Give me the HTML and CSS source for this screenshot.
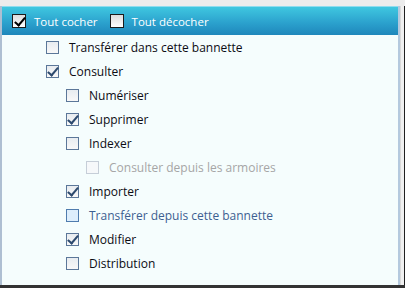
FILE: index.html
```html
<html>

<head>
  <meta charset="utf-8">
  <link rel="stylesheet" href="styles.css">
</head>

<body>
  <div class="frame">
    <div class="panel">
      <div class="panel-header">
        <div class="header-item">
          <span class="box box-header checked"></span>
          <span class="text">Tout cocher</span>
        </div>
        <div class="header-item">
          <span class="box box-header"></span>
          <span class="text">Tout décocher</span>
        </div>
      </div>
      <div class="tree">
        <div class="tree-item level-1">
          <span class="box"></span>
          <span class="text">Transférer dans cette bannette</span>
        </div>
        <div class="tree-item level-1">
          <span class="box checked"></span>
          <span class="text">Consulter</span>
        </div>
        <div class="tree-item level-2">
          <span class="box"></span>
          <span class="text">Numériser</span>
        </div>
        <div class="tree-item level-2">
          <span class="box checked"></span>
          <span class="text">Supprimer</span>
        </div>
        <div class="tree-item level-2">
          <span class="box"></span>
          <span class="text">Indexer</span>
        </div>
        <div class="tree-item level-3 disabled">
          <span class="box"></span>
          <span class="text">Consulter depuis les armoires</span>
        </div>
        <div class="tree-item level-2">
          <span class="box checked"></span>
          <span class="text">Importer</span>
        </div>
        <div class="tree-item level-2 hover">
          <span class="box"></span>
          <span class="text">Transférer depuis cette bannette</span>
        </div>
        <div class="tree-item level-2">
          <span class="box checked"></span>
          <span class="text">Modifier</span>
        </div>
        <div class="tree-item level-2">
          <span class="box"></span>
          <span class="text">Distribution</span>
        </div>
      </div>
    </div>
    <div class="side"></div>
  </div>
  <div class="bottom-bar"></div>
</body>

</html>
```

FILE: styles.css
```css
html,
body {
  margin: 0;
  padding: 0;
  background: #ececec;
  font-family: "Open Sans", "Liberation Sans", sans-serif;
  font-size: 12px;
  height: 288px;
  overflow: hidden;
}

.frame {
  display: flex;
  flex-direction: row;
  height: 279px;
  padding-top: 6px;
}

.panel {
  display: flex;
  flex-direction: column;
  width: 398px;
  background: #f5fdfd;
  border-left: 2px solid #aebfd2;
  border-right: 2px solid #b4c9de;
}

.side {
  width: 3px;
  background: #f0f0f0;
  border-left: 1px solid #d8d8d8;
  border-right: 1px solid #202020;
}

.bottom-bar {
  height: 3px;
  background: #333;
}

/* Header */
.panel-header {
  display: flex;
  flex-direction: row;
  align-items: center;
  height: 28px;
  padding: 0 10px;
  gap: 12px;
  border-top: 1px solid #8fdcee;
  background: linear-gradient(#3fc7e0, #2a9fcc 60%, #1f87bb);
}

.header-item {
  display: flex;
  align-items: center;
  gap: 8px;
  color: #fff;
  font-size: 11.5px;
}

/* Tree */
.tree {
  display: flex;
  flex-direction: column;
}

.tree-item {
  display: flex;
  align-items: center;
  height: 24px;
  gap: 10px;
  color: #0c0c14;
}

.level-1 { padding-left: 44px; }
.level-2 { padding-left: 64px; }
.level-3 { padding-left: 84px; }

.box {
  position: relative;
  width: 11px;
  height: 11px;
  border: 1px solid #5b7799;
  background: linear-gradient(#e8ecf0, #f8f8f8);
  flex-shrink: 0;
}

.box.checked::after {
  content: "";
  position: absolute;
  left: 3px;
  top: -1px;
  width: 4px;
  height: 9px;
  border: solid #2c4a6e;
  border-width: 0 2px 2px 0;
  transform: rotate(40deg);
}

.box-header {
  width: 12px;
  height: 12px;
  border-color: #1a1a1a;
  background: linear-gradient(#dcdcdc, #ffffff);
}

.box-header.checked::after {
  border-color: #000;
  left: 4px;
  top: 0;
}

.disabled {
  color: #a6a6a6;
}

.disabled .box {
  border-color: #c6ced8;
  background: #f6f8fa;
}

.hover {
  color: #3d5f91;
}

.hover .box {
  background: #ddeefc;
  border-color: #4f7cae;
}
```
